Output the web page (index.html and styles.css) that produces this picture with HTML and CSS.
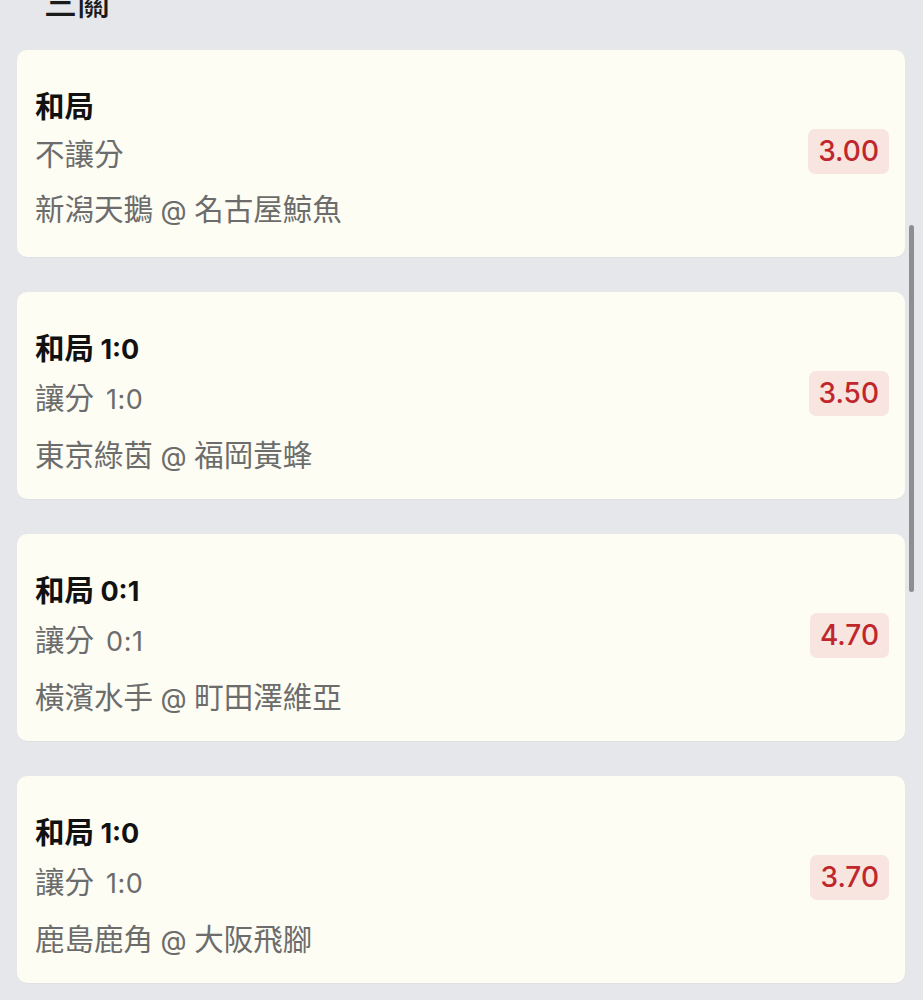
FILE: index.html
```html
<!DOCTYPE html>
<html lang="zh-Hant">
<head>
<meta charset="utf-8">
<title>三關</title>
<link rel="stylesheet" href="styles.css">
</head>
<body>
<div class="page">
  <h2 class="section-title">三關</h2>
  <div class="list">
    <div class="card">
      <div class="info">
        <div class="title">和局</div>
        <div class="sub">不讓分</div>
        <div class="teams">新潟天鵝<span class="lat"> @ </span>名古屋鯨魚</div>
      </div>
      <div class="odds">3.00</div>
    </div>
    <div class="card">
      <div class="info">
        <div class="title">和局<span class="lat"> 1:0</span></div>
        <div class="sub">讓分<span class="lat"> 1:0</span></div>
        <div class="teams">東京綠茵<span class="lat"> @ </span>福岡黃蜂</div>
      </div>
      <div class="odds">3.50</div>
    </div>
    <div class="card">
      <div class="info">
        <div class="title">和局<span class="lat"> 0:1</span></div>
        <div class="sub">讓分<span class="lat"> 0:1</span></div>
        <div class="teams">橫濱水手<span class="lat"> @ </span>町田澤維亞</div>
      </div>
      <div class="odds">4.70</div>
    </div>
    <div class="card">
      <div class="info">
        <div class="title">和局<span class="lat"> 1:0</span></div>
        <div class="sub">讓分<span class="lat"> 1:0</span></div>
        <div class="teams">鹿島鹿角<span class="lat"> @ </span>大阪飛腳</div>
      </div>
      <div class="odds">3.70</div>
    </div>
  </div>
</div>
<div class="scrollbar"></div>
</body>
</html>
```

FILE: styles.css
```css
html, body {
  margin: 0;
  padding: 0;
  background: #e6e7ea;
}
body {
  font-family: "Inter", "Noto Sans CJK TC", sans-serif;
  color: #111;
  overflow: hidden;
  height: 1000px;
}
.page {
  padding: 0 18px 0 17px;
}
.section-title {
  margin: -15px 0 0 27px;
  font-size: 33px;
  line-height: 36px;
  font-weight: 500;
  color: #1a1a1a;
}
.list {
  margin-top: 29px;
  display: flex;
  flex-direction: column;
  gap: 35px;
}
.card {
  background: #fdfdf4;
  border-radius: 10px;
  height: 207px;
  box-sizing: border-box;
  padding: 38px 16px 0 18px;
  display: flex;
  justify-content: space-between;
  align-items: flex-start;
  box-shadow: 0 1px 1px rgba(0,0,0,0.03);
}
.info {
  display: flex;
  flex-direction: column;
  font-size: 29.5px;
  line-height: 36px;
}
.lat {
  font-size: 27px;
}
.title {
  font-weight: 700;
  color: #111;
}
.sub {
  margin-top: 12px;
  color: #6c6c6c;
}
.sub .lat {
  word-spacing: 4px;
  letter-spacing: 0.5px;
}
.teams {
  margin-top: 19px;
  color: #6c6c6c;
}
.odds {
  align-self: center;
  margin-top: -38px;
  margin-bottom: 5px;
  height: 45px;
  line-height: 45px;
  padding: 0 10px;
  border-radius: 7px;
  background: #f8e5df;
  color: #bf272c;
  font-size: 28px;
  font-weight: 500;
}
.scrollbar {
  position: absolute;
  left: 909px;
  top: 225px;
  width: 5px;
  height: 367px;
  border-radius: 3px;
  background: #8e8e91;
}
```
